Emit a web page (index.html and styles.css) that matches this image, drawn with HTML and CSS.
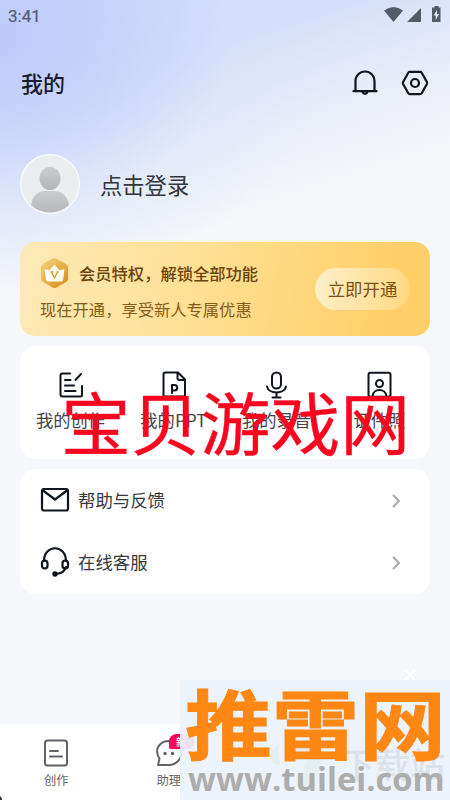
FILE: index.html
```html
<!DOCTYPE html>
<html lang="zh-CN">
<head>
<meta charset="utf-8">
<title>我的</title>
<link rel="stylesheet" href="styles.css">
</head>
<body>
<div class="screen">
  <div class="status">
    <span class="time">3:41</span>
    <svg class="signals" width="58" height="18" viewBox="0 0 58 18"><path d="M0 4.500Q9.500-2.500 19 4.500L9.500 16Z"/><path d="M37 2V16H23Z"/><path fill-rule="evenodd" d="M48.500 1.500h2V0h4v1.500h2V16h-8.500V1.500ZM53 4l-3.500 5.500h2.200V14l3.300-6h-2Z"/></svg>
  </div>
  <header class="header">
    <h1>我的</h1>
    <div class="actions">
      <svg class="ico" width="26" height="28" viewBox="0 0 26 28"><path d="M3.500 22V12a9.500 9.500 0 0 1 19 0v10M1.500 22.200h23M10.500 23a2.600 2.600 0 0 0 5 0"/></svg>
      <svg class="ico" width="28" height="28" viewBox="0 0 28 28"><path d="M8.800 2.800h10.400q1 0 1.500.9l5.200 9.300q.5 1 0 2l-5.200 9.300q-.5.900-1.500.9H8.800q-1 0-1.500-.9L2.100 15q-.5-1 0-2l5.200-9.300q.5-.9 1.500-.9Z"/><circle cx="14" cy="14" r="4"/></svg>
    </div>
  </header>
  <div class="profile">
    <svg width="60" height="60" viewBox="0 0 60 60"><defs><linearGradient id="person" x2="0" y2="1"><stop stop-color="#c9cbce"/><stop offset="1" stop-color="#b5b7bb"/></linearGradient><clipPath id="round"><circle cx="30" cy="30" r="28.500"/></clipPath></defs><circle cx="30" cy="30" r="29.300" fill="#ebeeee" stroke="#f7f9fc" stroke-width="1.500"/><g fill="url(#person)" clip-path="url(#round)"><ellipse cx="30" cy="24.500" rx="10.500" ry="11.500"/><path d="M11 54c0-11 6-17 15-17h8c9 0 15 6 15 17v6H11Z"/></g></svg>
    <span>点击登录</span>
  </div>
  <section class="vip">
    <div class="vip-copy">
      <div class="vip-title">
        <svg width="29" height="32" viewBox="0 0 29 32"><defs><linearGradient id="gold" x2=".8" y2="1"><stop stop-color="#f6d77f"/><stop offset="1" stop-color="#d8901d"/></linearGradient></defs><path fill="url(#gold)" d="M12.500 1.500q2-1.100 4 0l9.500 5.400q2 1.200 2 3.400v11.400q0 2.200-2 3.400l-9.500 5.400q-2 1.100-4 0L3 25.100q-2-1.200-2-3.400V10.300q0-2.200 2-3.400Z"/><path fill="#fffdf5" d="M4.500 12l5 1.500 5-6 5 6 5-1.500-1.500 11q-.3 1.500-2 1.500H8q-1.700 0-2-1.500Z"/><path d="M11.500 15l3 6 3-6M10.500 15h3m3 0h2" fill="none" stroke="#d89b35" stroke-width="1.400"/></svg>
        <b>会员特权，解锁全部功能</b>
      </div>
      <p>现在开通，享受新人专属优惠</p>
    </div>
    <span class="open">立即开通</span>
  </section>
  <section class="tools">
    <div class="tool"><svg class="ico" width="26" height="28" viewBox="0 0 26 28"><path d="M12 2.500H4.500q-2 0-2 2v19q0 2 2 2h18q1.500 0 1.500-1.500v-9M23 3l-5.500 6M7 9h5.500M7 14.500h9M7 20h10.500"/></svg><span>我的创作</span></div>
    <div class="tool"><svg class="ico" width="26" height="28" viewBox="0 0 26 28"><path d="M3.500 25.500q-1 0-1-1v-21q0-2 2-2H17l7 7v16q0 1-1 1ZM16.500 2v5q0 2 2 2H24M11 22v-8h2.500a2.700 2.700 0 0 1 0 5.400H11"/></svg><span>我的PPT</span></div>
    <div class="tool"><svg class="ico" width="26" height="28" viewBox="0 0 26 28"><rect x="8" y="1.500" width="9" height="16" rx="4.500"/><path d="M3 15.500c1.500 8 17.500 8 19 0M12.500 21.500v5M8.500 26.500h8"/></svg><span>我的录音</span></div>
    <div class="tool"><svg class="ico" width="26" height="28" viewBox="0 0 26 28"><rect x="1.500" y="1.800" width="22" height="24" rx="2"/><circle cx="12.500" cy="12.500" r="3.500"/><path d="M5.500 25c1-8 13-8 14 0"/></svg><span>证件照</span></div>
  </section>
  <section class="list">
    <div class="row"><svg class="ico" width="30" height="30" viewBox="0 0 30 30"><rect x="2" y="4" width="26" height="21.500" rx="2"/><path d="M3 5.500l12 9 12-9"/></svg><span>帮助与反馈</span><svg class="chev" width="10" height="16" viewBox="0 0 10 16"><path d="M2 2l6 6-6 6"/></svg></div>
    <div class="row"><svg class="ico" width="30" height="30" viewBox="0 0 30 30"><path d="M4 14c0-17 22-17 22 0M26 20c-1 4-5 6.500-10 7"/><rect x="2" y="13.500" width="5.500" height="8" rx="2.700"/><rect x="22.500" y="13.500" width="5.500" height="8" rx="2.700"/><circle cx="15" cy="27" r="1.600" fill="#10141f"/></svg><span>在线客服</span><svg class="chev" width="10" height="16" viewBox="0 0 10 16"><path d="M2 2l6 6-6 6"/></svg></div>
  </section>
  <nav class="nav">
    <div class="tab"><svg width="26" height="28" viewBox="0 0 26 28"><rect x="2" y="1.500" width="22" height="25" rx="2.500"/><path d="M7 12h8M7 17.500h12"/></svg><span>创作</span></div>
    <div class="tab"><svg width="28" height="28" viewBox="0 0 28 28"><path d="M3 26l1.500-6C-2 9 6 2 14 2s12.500 6 12.500 12S21 26 14 26Z"/><path class="dots" d="M10 14.500h.1M17.500 14.500h.1"/></svg><span>助理</span><em>新</em></div>
  </nav>
  <svg class="corner" width="3" height="4" viewBox="0 0 3 4"><path d="M0 0Q2 1 2 4H0Z" fill="#333"/></svg>
  <div class="mark-red">宝贝游戏网</div>
  <svg class="close" width="14" height="14" viewBox="0 0 14 14"><path d="M2 2l10 10M12 2L2 12"/></svg>
  <div class="promo">
    <svg class="leaf" width="64" height="60" viewBox="0 0 64 60"><path d="M8 5C-4 14 1 27 10 24M24 6q22-9 31 3-4 31-24 42-2-22 10-34-17 7-17-11Z"/></svg>
    <div class="ghost">下载站</div>
    <div class="promo-name">推雷网</div>
    <div class="promo-url">www.tuilei.com</div>
  </div>
</div>
</body>
</html>
```
FILE: styles.css
```css
* { box-sizing: border-box; }
body { margin: 0; font-family: "Noto Sans CJK SC", sans-serif; }
h1, p { margin: 0; }
svg { display: block; flex: none; }
.screen {
  position: relative; width: 450px; height: 800px; overflow: hidden;
  display: flex; flex-direction: column; white-space: nowrap;
  background:
    radial-gradient(ellipse 330px 250px at 0 40px, rgba(187,199,251,.85) 0%, rgba(196,208,251,.6) 40%, rgba(215,224,250,.3) 70%, rgba(245,247,250,0) 100%),
    linear-gradient(162deg, #cdd8fa 0, #d6dffa 110px, #e9edf9 200px, #f5f7fa 285px);
}
.status { height: 32px; padding: 0 8px; display: flex; justify-content: space-between; align-items: center; color: #555c70; }
.time { font: 400 17px/32px Roboto, sans-serif; -webkit-text-stroke: .2px; }
.signals { fill: #555b66; margin-top: -3px; }
.header { height: 102px; padding: 0 21px; display: flex; justify-content: space-between; align-items: center; }
h1 { font-size: 22px; font-weight: 500; line-height: 30px; margin-top: -3px; color: #171b2c; }
.actions { display: flex; gap: 23px; }
.ico { fill: none; stroke: #10141f; stroke-width: 2.2; stroke-linecap: round; stroke-linejoin: round; }
.profile { height: 108px; padding: 20px 20px 0; display: flex; gap: 20px; font-size: 22.3px; line-height: 60px; color: #33363d; }
.vip {
  height: 94px; margin: 0 20px 10px; padding: 13px 20px 0; border-radius: 15px;
  display: flex; justify-content: space-between;
  background: linear-gradient(100deg, #fdeab9 0, #ffdf91 45%, #ffcf69 90%); color: #895b18;
}
.vip-title { display: flex; align-items: center; gap: 10px; height: 36px; font-size: 16.3px; color: #6c430b; }
.vip-title b { font-weight: 500; }
.vip p { font-size: 16.3px; line-height: 36px; }
.open { width: 95px; height: 42px; margin-top: 13px; border-radius: 21px; font-size: 17.4px; line-height: 42px; text-align: center; color: #7b5013; background: linear-gradient(100deg, #fff0cb, #ffdc8b 85%, #ffd478); }
.tools { height: 113px; margin: 0 20px 10px; display: grid; grid-template-columns: repeat(4, 103px); justify-content: center; border-radius: 16px; background: #fff; }
.tool { display: flex; flex-direction: column; align-items: center; padding-top: 25px; font-size: 17.3px; line-height: 26px; gap: 8px; color: #41444c; }
.tool .ico { stroke-width: 2; }
.list { height: 125px; margin: 0 20px; border-radius: 16px; background: #fff; }
.row { height: 62px; padding: 0 29px 0 20px; display: flex; align-items: center; gap: 8px; font-size: 17.4px; color: #363941; }
.row span { flex: 1; margin-top: -1px; }
.chev { fill: none; stroke: #a8abb0; stroke-width: 2; margin-top: 1px; }
.nav { margin-top: auto; height: 76px; display: grid; grid-template-columns: repeat(4, 112.500px); background: #fff; }
.tab { position: relative; display: flex; flex-direction: column; align-items: center; padding-top: 15px; gap: 5px; font-size: 12.3px; line-height: 16px; color: #666; }
.tab svg { fill: none; stroke: #62646a; stroke-width: 2; stroke-linecap: round; stroke-linejoin: round; }
.tab .dots { stroke-width: 3.5; }
.tab em { position: absolute; left: 56px; top: 10px; width: 25px; height: 15px; border-radius: 8px 8px 8px 2px; background: #f7075b; color: #fff; font: 500 10px/15px "Noto Sans CJK SC", sans-serif; text-align: center; }
.corner { position: absolute; left: 0; bottom: 0; }
.mark-red { position: absolute; left: 61px; top: 371px; font-size: 69.800px; line-height: 100px; color: #f9051f; -webkit-text-stroke: .4px; transform: scaleY(.97); }
.close { position: absolute; left: 403px; top: 668px; stroke: #fff; stroke-width: 1.800; }
.promo { position: absolute; left: 180px; top: 680px; width: 270px; height: 120px; overflow: hidden; background: rgba(236,242,250,.93); }
.promo-name { position: absolute; left: 5px; top: -9px; font-size: 87px; line-height: 100px; height: 100px; font-weight: 700; color: #ff8713; -webkit-text-stroke: 1px; transform: scaleY(.88); }
.promo-url { position: absolute; left: 8px; top: 78px; font: 700 32.700px/42px "Open Sans", sans-serif; color: #adadad; }
.ghost { position: absolute; left: 160px; top: 59px; font-size: 35px; line-height: 48px; font-weight: 500; color: #dce2ea; }
.leaf { position: absolute; left: 90px; top: 60px; fill: #e5eef1; }
```
